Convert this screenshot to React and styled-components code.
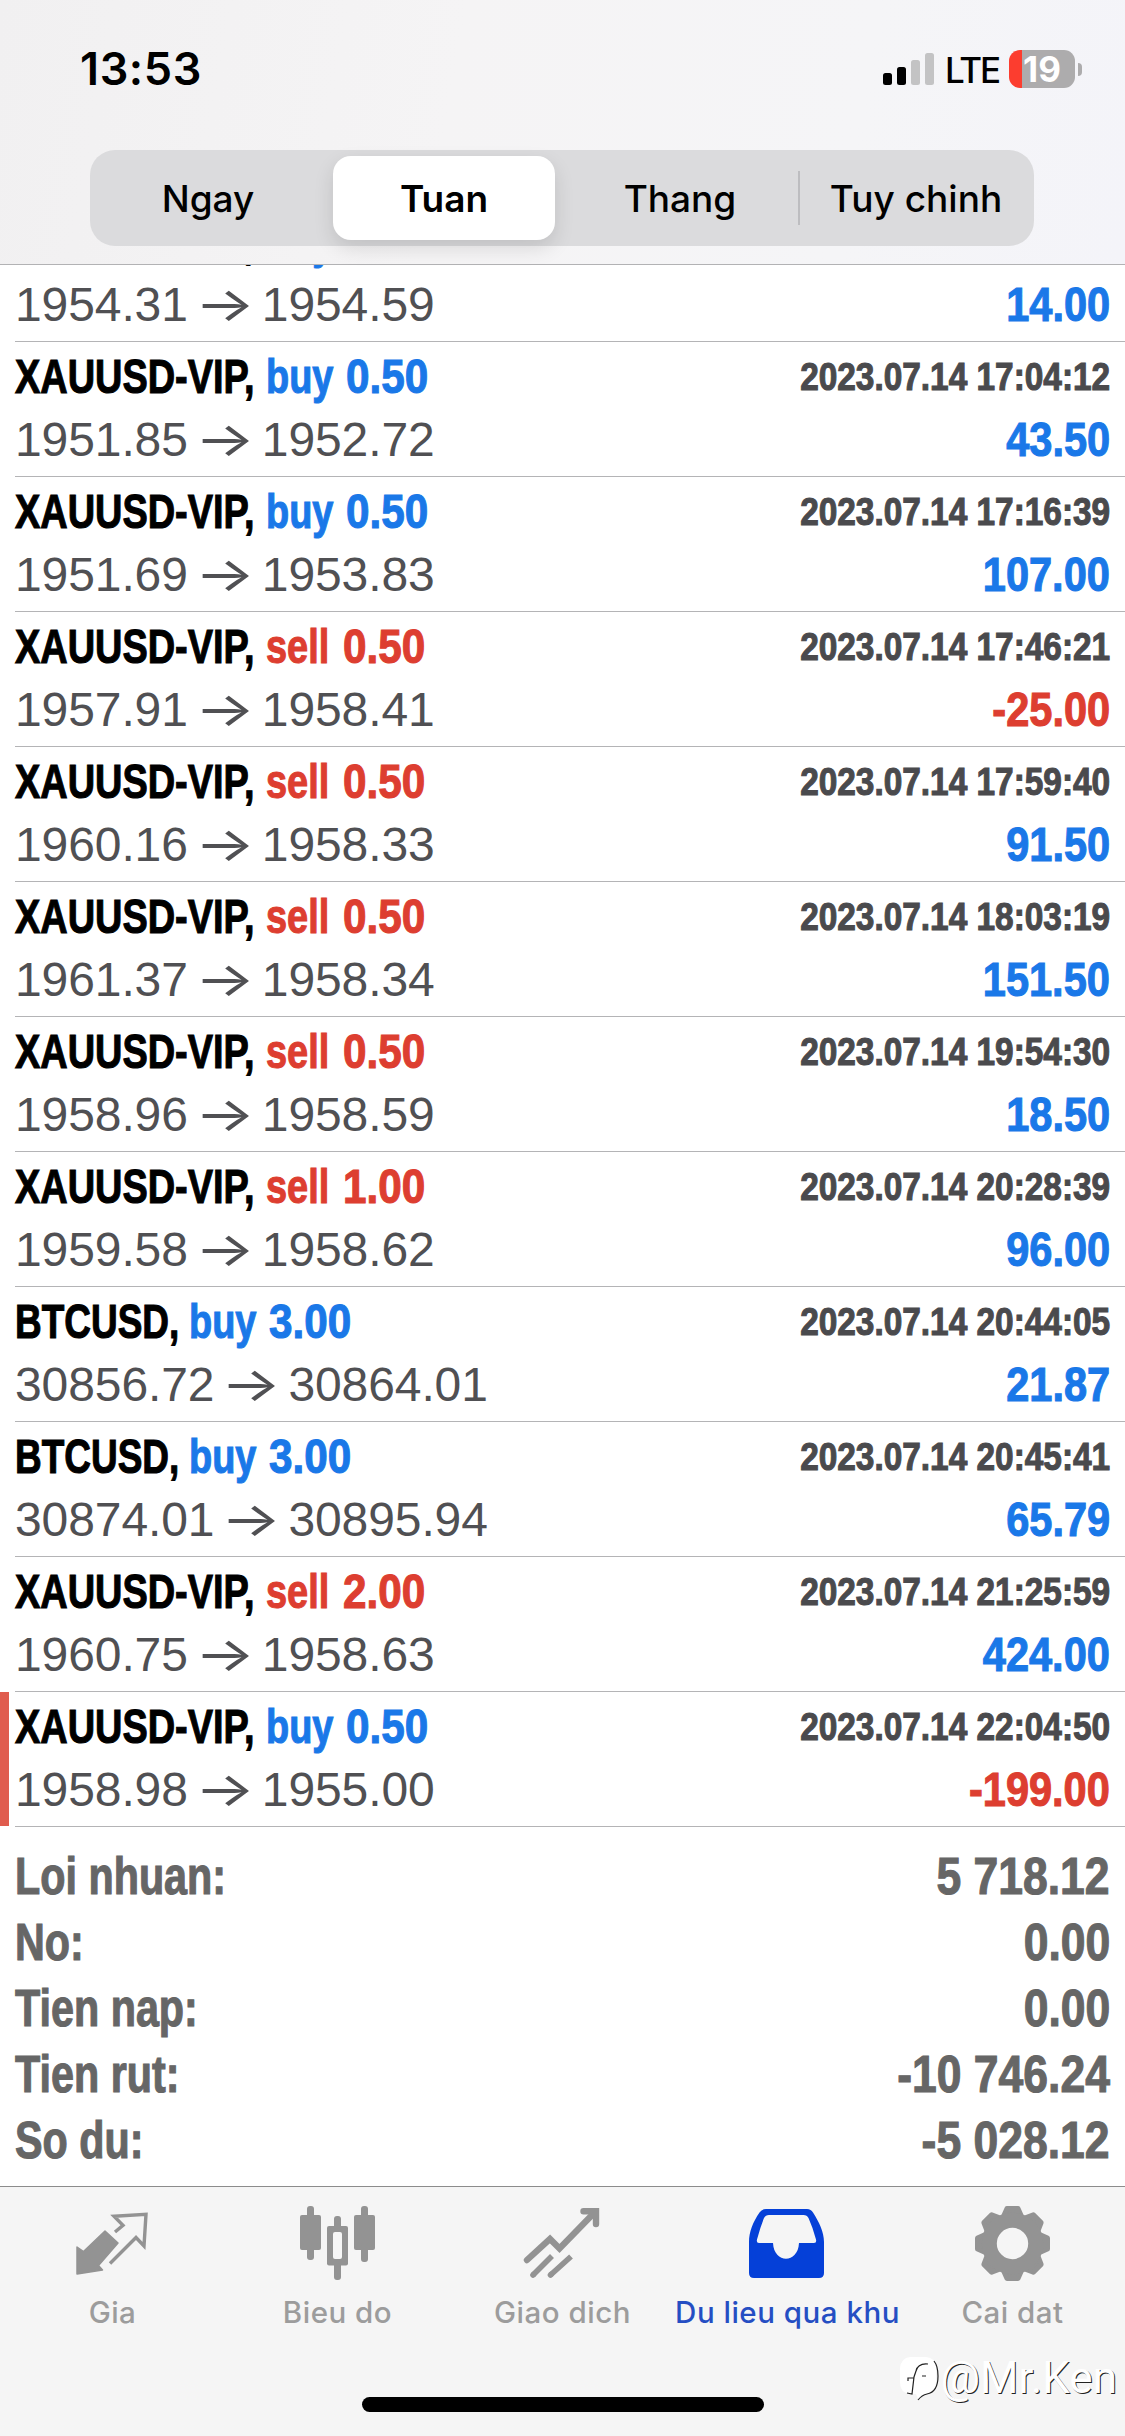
import styled, { createGlobalStyle } from "styled-components";

const BLUE = "#1a78e8";
const RED = "#dd3e30";

const trades = [
  { symbol: "XAUUSD-VIP,", side: "buy", volume: "0.50", from: "1954.31", to: "1954.59", time: "", profit: "14.00" },
  { symbol: "XAUUSD-VIP,", side: "buy", volume: "0.50", from: "1951.85", to: "1952.72", time: "2023.07.14 17:04:12", profit: "43.50" },
  { symbol: "XAUUSD-VIP,", side: "buy", volume: "0.50", from: "1951.69", to: "1953.83", time: "2023.07.14 17:16:39", profit: "107.00" },
  { symbol: "XAUUSD-VIP,", side: "sell", volume: "0.50", from: "1957.91", to: "1958.41", time: "2023.07.14 17:46:21", profit: "-25.00" },
  { symbol: "XAUUSD-VIP,", side: "sell", volume: "0.50", from: "1960.16", to: "1958.33", time: "2023.07.14 17:59:40", profit: "91.50" },
  { symbol: "XAUUSD-VIP,", side: "sell", volume: "0.50", from: "1961.37", to: "1958.34", time: "2023.07.14 18:03:19", profit: "151.50" },
  { symbol: "XAUUSD-VIP,", side: "sell", volume: "0.50", from: "1958.96", to: "1958.59", time: "2023.07.14 19:54:30", profit: "18.50" },
  { symbol: "XAUUSD-VIP,", side: "sell", volume: "1.00", from: "1959.58", to: "1958.62", time: "2023.07.14 20:28:39", profit: "96.00" },
  { symbol: "BTCUSD,", side: "buy", volume: "3.00", from: "30856.72", to: "30864.01", time: "2023.07.14 20:44:05", profit: "21.87" },
  { symbol: "BTCUSD,", side: "buy", volume: "3.00", from: "30874.01", to: "30895.94", time: "2023.07.14 20:45:41", profit: "65.79" },
  { symbol: "XAUUSD-VIP,", side: "sell", volume: "2.00", from: "1960.75", to: "1958.63", time: "2023.07.14 21:25:59", profit: "424.00" },
  { symbol: "XAUUSD-VIP,", side: "buy", volume: "0.50", from: "1958.98", to: "1955.00", time: "2023.07.14 22:04:50", profit: "-199.00", marked: true },
];

const totals = [
  ["Loi nhuan:", "5 718.12"],
  ["No:", "0.00"],
  ["Tien nap:", "0.00"],
  ["Tien rut:", "-10 746.24"],
  ["So du:", "-5 028.12"],
];

const periods = ["Ngay", "Tuan", "Thang", "Tuy chinh"];

export default function App() {
  return (
    <Screen>
      <GlobalStyle />
      <Header>
        <StatusBar>
          <Clock>13:53</Clock>
          <StatusIcons>
            <SignalIcon />
            <Network>LTE</Network>
            <Battery>
              <BatteryBody>19</BatteryBody>
              <BatteryNub />
            </Battery>
          </StatusIcons>
        </StatusBar>
        <Segments>
          {periods.map((label) => (
            <Segment key={label} $active={label === "Tuan"} $divided={label === "Tuy chinh"}>
              <span>{label}</span>
            </Segment>
          ))}
        </Segments>
      </Header>
      <History>
        <TradeList>
          {trades.map((trade) => (
            <TradeRow key={trade.from} {...trade} />
          ))}
        </TradeList>
        <Totals>
          {totals.map(([label, value]) => (
            <TotalRow key={label}>
              <TotalLabel>{label}</TotalLabel>
              <TotalValue>{value}</TotalValue>
            </TotalRow>
          ))}
        </Totals>
      </History>
      <BottomBar>
        <Tabs>
          <Tab>
            <QuotesIcon />
            <TabLabel>Gia</TabLabel>
          </Tab>
          <Tab>
            <ChartIcon />
            <TabLabel>Bieu do</TabLabel>
          </Tab>
          <Tab>
            <TradeIcon />
            <TabLabel>Giao dich</TabLabel>
          </Tab>
          <Tab $active>
            <HistoryIcon />
            <TabLabel>Du lieu qua khu</TabLabel>
          </Tab>
          <Tab>
            <SettingsIcon />
            <TabLabel>Cai dat</TabLabel>
          </Tab>
        </Tabs>
        <HomeIndicator />
        <Watermark>
          <WatermarkIcon />
          <span>@Mr.Ken</span>
        </Watermark>
      </BottomBar>
    </Screen>
  );
}

function TradeRow({ symbol, side, volume, from, to, time, profit, marked }) {
  const sideColor = side === "buy" ? BLUE : RED;
  return (
    <Row $marked={marked}>
      <RowBody>
        <RowLine $height={58}>
          <Title>
            <SymbolName $short={symbol === "BTCUSD,"}>{symbol}</SymbolName>
            <Side $color={sideColor} $side={side}>
              {side}
            </Side>
            <Volume $color={sideColor}>{volume}</Volume>
          </Title>
          <Time>{time}</Time>
        </RowLine>
        <RowLine $height={68}>
          <Prices>
            {from}
            <Arrow>→</Arrow>
            {to}
          </Prices>
          <Profit $color={profit.startsWith("-") ? RED : BLUE}>{profit}</Profit>
        </RowLine>
      </RowBody>
    </Row>
  );
}

function SignalIcon() {
  return (
    <svg width="51" height="34" viewBox="0 0 51 34">
      <rect x="0" y="21" width="9" height="12" rx="2.5" fill="#000" />
      <rect x="14" y="15" width="9" height="18" rx="2.5" fill="#000" />
      <rect x="28" y="8" width="9" height="25" rx="2.5" fill="#c3c3c4" />
      <rect x="42" y="1" width="9" height="32" rx="2.5" fill="#c3c3c4" />
    </svg>
  );
}

function QuotesIcon() {
  return (
    <TabIcon viewBox="73 2204 80 80">
      <path
        d="M105 2231 L118 2243 L98.5 2265.5 L102.5 2270 L77 2274 L77 2247 L83.5 2251.5 Z"
        fill="currentColor"
        stroke="currentColor"
        strokeWidth="1.5"
        strokeLinejoin="round"
      />
      <path
        d="M115 2232 L123 2225.3 L114 2216.2 L146 2214.2 L144 2246 L136 2237.5 L110 2263.5"
        fill="none"
        stroke="currentColor"
        strokeWidth="3.4"
      />
    </TabIcon>
  );
}

function ChartIcon() {
  return (
    <TabIcon viewBox="298 2204 80 80">
      <g fill="currentColor">
        <rect x="307" y="2206" width="7" height="54" rx="3" />
        <rect x="300" y="2215" width="21" height="35" rx="2" />
        <rect x="334" y="2216" width="7" height="64" rx="3" />
        <rect x="327" y="2226" width="21" height="39.5" rx="2" />
        <rect x="361" y="2206" width="7" height="56" rx="3" />
        <rect x="354" y="2215" width="21" height="35" rx="2" />
      </g>
      <rect x="333" y="2232" width="9" height="27" rx="2" fill="#f6f6f6" />
    </TabIcon>
  );
}

function TradeIcon() {
  return (
    <TabIcon viewBox="524 2204 80 80">
      <g fill="none" stroke="currentColor" strokeWidth="6.4">
        <path d="M528 2260 L551 2239 L560.5 2248.5 L595 2213" strokeLinecap="round" />
        <path d="M584.5 2211.200 H597 V2224" strokeLinecap="round" strokeLinejoin="miter" />
        <path d="M553 2256 L534 2275 M572 2256.5 L551.500 2275" strokeWidth="5.6" />
        <path d="M534.5 2274.500 L534 2275 M552 2274.500 L551.500 2275" strokeLinecap="round" strokeWidth="5.6" />
      </g>
    </TabIcon>
  );
}

function HistoryIcon() {
  return (
    <TabIcon viewBox="748 2204 80 80">
      <path
        fill="#0540d8"
        fillRule="evenodd"
        d="M766 2209 H807 Q811 2209 813 2212.500 C819 2222 824 2232 824 2242 V2273 Q824 2278 819 2278 H754 Q749 2278 749 2273 V2242 C749 2232 753 2222 759.500 2212.500 Q762 2209 766 2209 Z
           M769 2215 Q765.500 2215 764 2218 Q760 2228 757 2239.500 Q756.200 2243 759 2243 H773 C774 2264 798 2264 799 2243 H814 Q816.800 2243 816 2239.500 Q813 2228 808.500 2218 Q807 2215 803.500 2215 Z"
      />
    </TabIcon>
  );
}

function SettingsIcon() {
  return (
    <TabIcon viewBox="-39.5 -39.5 80 80">
      <g fill="currentColor" stroke="currentColor" strokeWidth="5" strokeLinejoin="round">
        {[0, 45, 90, 135, 180, 225, 270, 315].map((angle) => (
          <path key={angle} d="M-9.500 -26 L-5.500 -35 H5.500 L9.500 -26 Z" transform={`rotate(${angle})`} />
        ))}
      </g>
      <circle r="23.2" fill="none" stroke="currentColor" strokeWidth="15" />
    </TabIcon>
  );
}

function WatermarkIcon() {
  return (
    <svg width="42" height="48" viewBox="0 0 42 48">
      <path d="M12 3 H28 Q38 4 38 14 V27 Q38 38 28 40 L20 45 L18 40 H12 Q2 39 2 28 V14 Q3 4 12 3 Z" fill="#fff" />
      <path d="M36 7 Q40 12 40 22 Q40 38 29 40 Q24 41 20 46" fill="none" stroke="#222" strokeWidth="1.2" />
      <path d="M30 10 Q20 9 18 17 L16 23 L14 40 L9 39 M10 27 V24 H16 M24 22 H28" fill="none" stroke="#222" strokeWidth="1.2" />
    </svg>
  );
}

const GlobalStyle = createGlobalStyle`
  * {
    box-sizing: border-box;
  }

  body {
    margin: 0;
    background: #ffffff;
  }
`;

const Screen = styled.div`
  width: 1125px;
  height: 2436px;
  display: flex;
  flex-direction: column;
  overflow: hidden;
  background: #ffffff;
  font-family: "Liberation Sans", Arial, sans-serif;
`;

const Header = styled.header`
  height: 265px;
  flex-shrink: 0;
  border-bottom: 1px solid #b2b2b4;
  background: linear-gradient(100deg, #f1f0f1 0%, #f5f4f5 40%, #f5f5f7 75%, #f4f4f9 100%);
  font-family: Inter, sans-serif;
`;

const StatusBar = styled.div`
  height: 150px;
  padding: 42px 43px 0 80px;
  display: flex;
  justify-content: space-between;
`;

const Clock = styled.div`
  height: 54px;
  line-height: 54px;
  font-size: 45px;
  font-weight: 600;
  letter-spacing: 0.6px;
`;

const StatusIcons = styled.div`
  height: 54px;
  display: flex;
  align-items: center;
`;

const Network = styled.div`
  width: 53px;
  margin: 2px 11px 0 11px;
  font-size: 35px;
  line-height: 44px;
  font-weight: 500;
  letter-spacing: -2.2px;
`;

const Battery = styled.div`
  display: flex;
  align-items: center;
  gap: 3px;
`;

const BatteryBody = styled.div`
  width: 66px;
  height: 38px;
  border-radius: 11px;
  background: linear-gradient(90deg, #fc3d2f 13px, #adacad 13px);
  color: #ffffff;
  font-size: 35px;
  line-height: 38px;
  font-weight: 700;
  text-align: center;
`;

const BatteryNub = styled.div`
  width: 4px;
  height: 13px;
  border-radius: 0 5px 5px 0;
  background: #adacad;
`;

const Segments = styled.div`
  width: 944px;
  height: 96px;
  margin-left: 90px;
  border-radius: 25px;
  display: flex;
  background: #dbdbdd;
`;

const Segment = styled.div`
  flex: 1;
  padding: 6px 7px;
  display: flex;
  ${(props) =>
    props.$divided &&
    `background: linear-gradient(#bdbdc0, #bdbdc0) 0 21px / 2px 54px no-repeat;`}

  span {
    flex: 1;
    border-radius: 18px;
    font-size: 37px;
    line-height: 85px;
    text-align: center;
    white-space: nowrap;
    font-weight: ${(props) => (props.$active ? 600 : 450)};
    ${(props) =>
      props.$active && `background: #ffffff; box-shadow: 0 8px 20px rgba(0, 0, 0, 0.12);`}
  }
`;

const History = styled.main`
  flex: 1;
  min-height: 0;
  overflow: hidden;
`;

/* The list is scrolled, so its first row starts under the header. */
const TradeList = styled.div`
  margin-top: -58px;
`;

const Row = styled.div`
  height: 135px;
  padding-left: 15px;
  background: ${(props) =>
    props.$marked ? "linear-gradient(#e05c4e, #e05c4e) 0 0 / 9px 134px no-repeat" : "none"};
`;

const RowBody = styled.div`
  height: 135px;
  padding: 6px 15px 0 0;
  border-bottom: 1px solid #b4b4b6;
`;

const RowLine = styled.div`
  height: ${(props) => props.$height}px;
  line-height: ${(props) => props.$height}px;
  display: flex;
  justify-content: space-between;
  white-space: nowrap;
`;

const Title = styled.div`
  display: flex;
`;

/* Condensed bold text: the regular face squeezed along x. */
const Condensed = styled.span`
  display: block;
  font-size: 48px;
  font-weight: 700;
  transform: scaleX(0.79);
  transform-origin: left;
  -webkit-text-stroke: 1.1px currentColor;
`;

const SymbolName = styled(Condensed)`
  width: ${(props) => (props.$short ? 174 : 251)}px;
  transform: scaleX(${(props) => (props.$short ? 0.77 : 0.79)});
`;

const Side = styled(Condensed)`
  width: ${(props) => (props.$side === "buy" ? 80 : 77)}px;
  color: ${(props) => props.$color};
`;

const Volume = styled(Condensed)`
  color: ${(props) => props.$color};
  transform: scaleX(0.88);
`;

const Time = styled(Condensed)`
  color: #4a4a4d;
  font-size: 39px;
  line-height: 57px;
  transform: scaleX(0.856);
  transform-origin: right;
`;

const Profit = styled(Condensed)`
  color: ${(props) => props.$color};
  transform: scaleX(0.865);
  transform-origin: right;
`;

const Prices = styled.div`
  color: #505053;
  font-size: 48px;
  letter-spacing: -0.1px;
`;

const Arrow = styled.span`
  display: inline-block;
  width: 56px;
  margin: 0 9px;
  font-family: Inter, sans-serif;
  font-size: 48px;
  line-height: 1;
  text-align: center;
  transform: scaleX(1.32);
`;

const Totals = styled.div`
  padding: 17px 15px 0;
`;

const TotalRow = styled.div`
  height: 66px;
  line-height: 65px;
  display: flex;
  justify-content: space-between;
  color: #666666;
`;

const TotalLabel = styled(Condensed)`
  font-size: 51px;
  transform: scaleX(0.81);
`;

const TotalValue = styled(Condensed)`
  font-size: 51px;
  transform: scaleX(0.872);
  transform-origin: right;
`;

const BottomBar = styled.footer`
  position: relative;
  height: 250px;
  flex-shrink: 0;
  border-top: 1px solid #8c8c8c;
  background: #f5f5f5;
`;

const Tabs = styled.nav`
  height: 210px;
  display: flex;
  font-family: Inter, sans-serif;
`;

const Tab = styled.div`
  width: 225px;
  padding-top: 17px;
  display: flex;
  flex-direction: column;
  align-items: center;
  color: ${(props) => (props.$active ? "#0e3dbe" : "#939393")};
`;

const TabIcon = styled.svg`
  width: 80px;
  height: 80px;
`;

const TabLabel = styled.div`
  margin-top: 8px;
  font-size: 29.5px;
  line-height: 40px;
  font-weight: 500;
  letter-spacing: 0.5px;
  white-space: nowrap;
  opacity: 0.9;
`;

const HomeIndicator = styled.div`
  width: 402px;
  height: 15px;
  margin: 0 auto;
  border-radius: 8px;
  background: #000000;
`;

const Watermark = styled.div`
  position: absolute;
  right: 8px;
  bottom: 33px;
  display: flex;
  align-items: center;
  gap: 1px;
  color: #ffffff;
  font-family: Roboto, sans-serif;
  font-size: 44px;
  line-height: 50px;
  text-shadow: 1px 1px 0 #222222;
`;
